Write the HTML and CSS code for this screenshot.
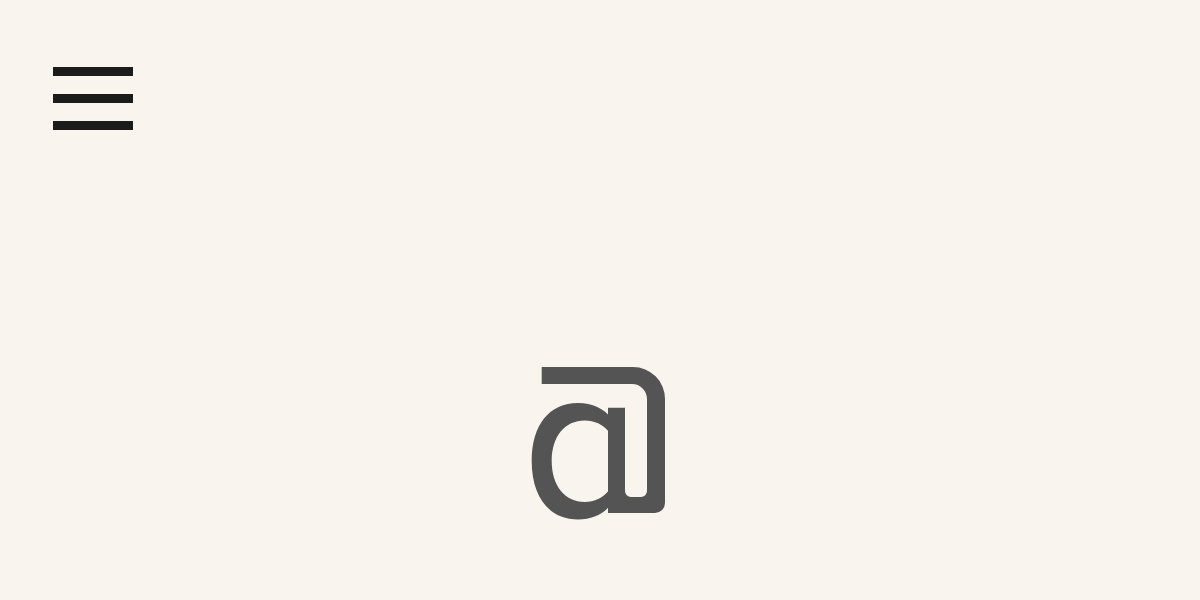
FILE: index.html
```html
<!DOCTYPE html>
<html lang="en">
<head>
<meta charset="utf-8">
<title>Home</title>
<link rel="stylesheet" href="styles.css">
</head>
<body>
<header class="site-header">
  <button class="menu-toggle" aria-label="Open menu">
    <span class="bar"></span>
    <span class="bar"></span>
    <span class="bar"></span>
  </button>
</header>
<main class="hero">
  <svg class="logo" viewBox="530 362 140 160" width="140" height="160" aria-label="Logo">
    <path fill-rule="evenodd" d="M531.7,461 C531.7,425 549.3,403 578,403 C606.7,403 624,425 624,461 C624,497 606.7,519.5 578,519.5 C549.3,519.5 531.7,497 531.7,461 Z M551.7,461 C551.7,436.4 564.9,420.5 584.7,420.5 C604.5,420.5 617.7,436.4 617.7,461 C617.7,485.6 604.5,502 584.7,502 C564.9,502 551.7,485.6 551.7,461 Z"/>
    <path d="M541.7,367 H633 A32,32 0 0 1 665,399 V503 A10,10 0 0 1 655,513 H608 V407.7 H625 V491 A6,6 0 0 0 631,497 H641 A6,6 0 0 0 647,491 V399 A15,15 0 0 0 632,384 H541.7 Z"/>
  </svg>
</main>
</body>
</html>
```

FILE: styles.css
```css
html, body {
  margin: 0;
  padding: 0;
}

body {
  background: #f9f4ee;
  font-family: "Liberation Sans", Arial, sans-serif;
  width: 1200px;
  height: 600px;
  overflow: hidden;
}

.site-header {
  display: flex;
  padding: 67px 0 0 53px;
}

.menu-toggle {
  display: flex;
  flex-direction: column;
  gap: 18px;
  padding: 0;
  margin: 0;
  border: 0;
  background: none;
  cursor: pointer;
}

.menu-toggle .bar {
  display: block;
  width: 80px;
  height: 9px;
  background: #1b1b1b;
}

.hero {
  display: flex;
  justify-content: center;
  padding-top: 232px;
}

.logo {
  display: block;
  fill: #545454;
}
```
